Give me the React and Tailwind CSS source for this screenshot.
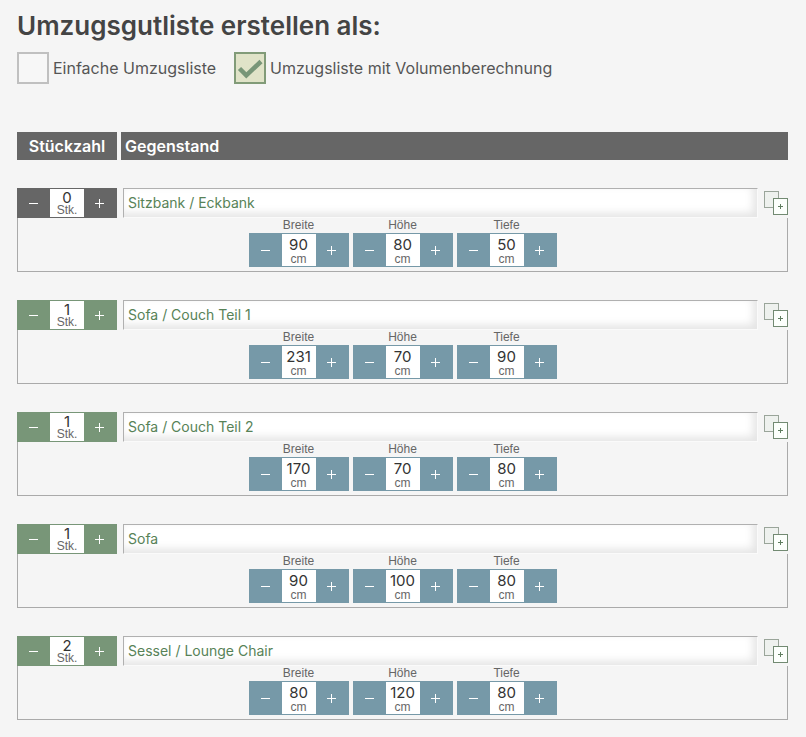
import React, { useState } from 'react';
import clsx from 'clsx';

const initialItems = [
  { id: 1, name: 'Sitzbank / Eckbank', count: 0, width: 90, height: 80, depth: 50 },
  { id: 2, name: 'Sofa / Couch Teil 1', count: 1, width: 231, height: 70, depth: 90 },
  { id: 3, name: 'Sofa / Couch Teil 2', count: 1, width: 170, height: 70, depth: 80 },
  { id: 4, name: 'Sofa', count: 1, width: 90, height: 100, depth: 80 },
  { id: 5, name: 'Sessel / Lounge Chair', count: 2, width: 80, height: 120, depth: 80 },
];

const dimensions = [
  { key: 'width', label: 'Breite' },
  { key: 'height', label: 'Höhe' },
  { key: 'depth', label: 'Tiefe' },
];

const toneClasses = {
  gray: 'border-[#666666] bg-[#666666]',
  green: 'border-[#789678] bg-[#789678]',
  blue: 'border-[#7699a8] bg-[#7699a8]',
};

const MinusIcon = () => (
  <svg width="11" height="11" viewBox="0 0 11 11" aria-hidden="true">
    <path d="M1 5.5h9" stroke="white" />
  </svg>
);

const PlusIcon = () => (
  <svg width="11" height="11" viewBox="0 0 11 11" aria-hidden="true">
    <path d="M1 5.5h9M5.5 1v9" stroke="white" />
  </svg>
);

const CopyIcon = () => (
  <svg width="24" height="24" viewBox="0 0 24 24" fill="none" aria-hidden="true">
    <rect x="0.5" y="0.5" width="14" height="16" fill="#eef1ee" stroke="#9aa59a" />
    <rect x="9.5" y="7.5" width="14" height="16" fill="#fcfffc" stroke="#728a72" />
    <path d="M14 15.5h5M16.5 13v5" stroke="#5f7d5f" />
  </svg>
);

const Stepper = ({ id, label, value, unit, tone, tall, onChange }) => (
  <div
    className={clsx(
      'flex w-[100px] shrink-0 border-y',
      toneClasses[tone],
      tall ? 'h-[34px]' : 'h-[30px]'
    )}
  >
    <button
      type="button"
      aria-label={`${label} verringern`}
      onClick={() => onChange(Math.max(0, value - 1))}
      className="flex w-[33px] items-center justify-center"
    >
      <MinusIcon />
    </button>
    <div className="flex w-[34px] flex-col items-center justify-center bg-white">
      <input
        id={id}
        aria-label={label}
        inputMode="numeric"
        value={value}
        onChange={(e) => onChange(Number(e.target.value) || 0)}
        className={clsx(
          'w-full bg-transparent text-center text-[15px] text-[#333333] outline-none',
          tall ? 'h-[18px]' : 'h-[14px]'
        )}
      />
      <span className="font-['Liberation_Sans',sans-serif] text-xs leading-[10px] text-[#666666]">
        {unit}
      </span>
    </div>
    <button
      type="button"
      aria-label={`${label} erhöhen`}
      onClick={() => onChange(value + 1)}
      className="flex w-[33px] items-center justify-center pr-0.5"
    >
      <PlusIcon />
    </button>
  </div>
);

const ModeOption = ({ label, checked, onChange }) => (
  <label className="flex items-center gap-1 text-base text-[#555555]">
    <span className="relative size-8">
      <input
        type="radio"
        name="mode"
        checked={checked}
        onChange={onChange}
        className="block size-8 appearance-none border-2 border-[#c0c0c0] bg-[#f7f7f7] checked:border-[#819b78] checked:bg-[#e0e3c8]"
      />
      {checked && (
        <svg
          className="pointer-events-none absolute inset-0"
          width="32"
          height="32"
          viewBox="0 0 32 32"
          fill="none"
          aria-hidden="true"
        >
          <path d="M5.5 16.5L12.3 23.3L27 9.5" stroke="#789678" strokeWidth="4.5" />
        </svg>
      )}
    </span>
    {label}
  </label>
);

const ItemRow = ({ item, showVolume, onUpdate, onCopy }) => (
  <li>
    <div className="flex items-center">
      <Stepper
        id={`count-${item.id}`}
        label="Stückzahl"
        value={item.count}
        unit="Stk."
        tone={item.count > 0 ? 'green' : 'gray'}
        onChange={(count) => onUpdate({ count })}
      />
      <input
        aria-label="Gegenstand"
        value={item.name}
        onChange={(e) => onUpdate({ name: e.target.value })}
        className="ml-1.5 h-[30px] min-w-0 flex-1 border border-t-[#b0b0b0] border-r-[#fafafa] border-b-[#fafafa] border-l-[#b0b0b0] bg-white px-1 pb-0.5 text-sm text-[#578257] shadow-[inset_-4px_-4px_8px_#e4e4e4] outline-none"
      />
      <button type="button" aria-label="Gegenstand kopieren" onClick={onCopy} className="ml-1.5">
        <CopyIcon />
      </button>
    </div>
    {showVolume && (
      <div className="flex justify-center gap-1 border border-t-0 border-[#aaaaaa] pb-1">
        {dimensions.map(({ key, label }) => (
          <div key={key}>
            <label
              htmlFor={`${key}-${item.id}`}
              className="block text-center font-['Liberation_Sans',sans-serif] text-xs leading-[15px] text-[#666666]"
            >
              {label}
            </label>
            <Stepper
              id={`${key}-${item.id}`}
              label={label}
              value={item[key]}
              unit="cm"
              tone="blue"
              tall
              onChange={(value) => onUpdate({ [key]: value })}
            />
          </div>
        ))}
      </div>
    )}
  </li>
);

const App = () => {
  const [mode, setMode] = useState('volume');
  const [items, setItems] = useState(initialItems);

  const updateItem = (id, changes) => {
    setItems(items.map((item) => (item.id === id ? { ...item, ...changes } : item)));
  };

  const copyItem = (index) => {
    const copy = { ...items[index], id: Math.max(...items.map((item) => item.id)) + 1 };
    setItems([...items.slice(0, index + 1), copy, ...items.slice(index + 1)]);
  };

  return (
    <main className="min-h-screen bg-[#f5f5f5] pt-2 pr-[18px] pb-4 pl-[17px] font-[Inter,sans-serif]">
      <h1 className="text-[26px] leading-9 font-semibold text-[#444444]">
        Umzugsgutliste erstellen als:
      </h1>
      <div className="mt-2 flex flex-wrap gap-x-[18px] gap-y-2">
        <ModeOption
          label="Einfache Umzugsliste"
          checked={mode === 'simple'}
          onChange={() => setMode('simple')}
        />
        <ModeOption
          label="Umzugsliste mit Volumenberechnung"
          checked={mode === 'volume'}
          onChange={() => setMode('volume')}
        />
      </div>

      {/* List header */}
      <div className="mt-12 flex gap-1 text-base leading-7 font-semibold text-white">
        <div className="w-[100px] bg-[#666666] text-center">Stückzahl</div>
        <div className="flex-1 bg-[#666666] px-1">Gegenstand</div>
      </div>

      <ul className="mt-7 space-y-7">
        {items.map((item, index) => (
          <ItemRow
            key={item.id}
            item={item}
            showVolume={mode === 'volume'}
            onUpdate={(changes) => updateItem(item.id, changes)}
            onCopy={() => copyItem(index)}
          />
        ))}
      </ul>
    </main>
  );
};

export default App;
